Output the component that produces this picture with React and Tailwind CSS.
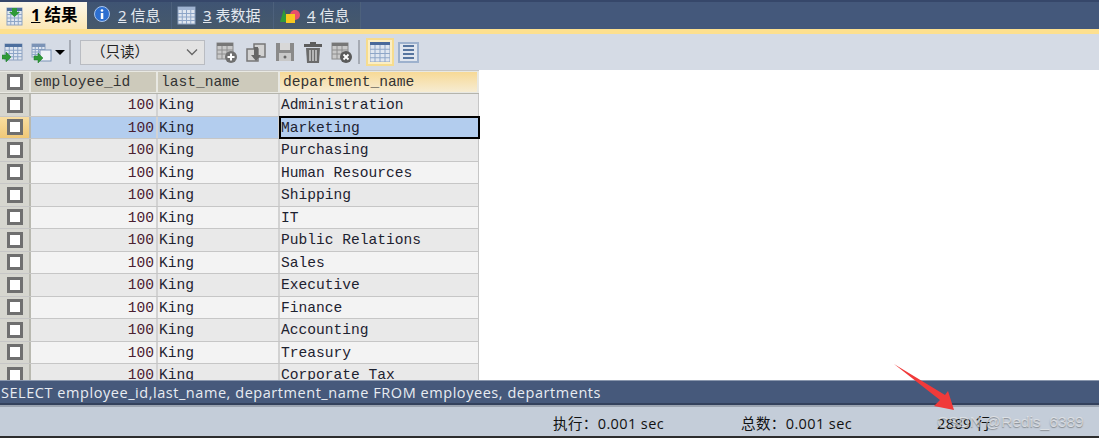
import React from "react";

const depts = ["Administration","Marketing","Purchasing","Human Resources","Shipping","IT","Public Relations","Sales","Executive","Finance","Accounting","Treasury","Corporate Tax"];
const cjk = { fontFamily: '"Noto Sans","Noto Sans CJK SC",sans-serif' };

function GridIcon({ x = 0, y = 0, w = 20, h = 20, c = "#4d6f9e" }) {
  return (
    <g>
      <rect x={x} y={y} width={w} height={h} fill="#dfe6f0" stroke="#8ea2bf" />
      <rect x={x} y={y} width={w} height={3} fill={c} />
      {[1, 2, 3].map((i) => <line key={i} x1={x + (i * w) / 4} y1={y + 3} x2={x + (i * w) / 4} y2={y + h} stroke="#8ea6c8" />)}
      {[1, 2, 3].map((i) => <line key={i} x1={x} y1={y + 3 + (i * (h - 3)) / 4} x2={x + w} y2={y + 3 + (i * (h - 3)) / 4} stroke="#8ea6c8" />)}
    </g>
  );
}
const Svg = ({ children, w = 24, h = 24, className = "" }) => <svg width={w} height={h} viewBox={`0 0 ${w} ${h}`} className={`shrink-0 ${className}`}>{children}</svg>;
const Green = ({ x, y }) => <path transform={`translate(${x} ${y})`} d="M0 3h4V0l5 5-5 5V7H0z" fill="#2f9a38" stroke="#1c7a2a" strokeWidth=".5" />;

const Tab = ({ icon, num, label, active, w }) => (
  <div style={{ ...cjk }} className={`flex items-center h-full ${w} pl-[5px] gap-[6px] leading-none ${active ? "text-[16.5px] bg-gradient-to-b from-[#fbf7ea] to-[#fce7b4] text-black font-bold" : "text-[15px] bg-gradient-to-b from-[#3f5473] to-[#46596b] border-r border-[#4d617c] text-[#e3e8ef]"}`}>
    {icon}
    <span><span className="underline mr-[4px]">{num}</span>{label}</span>
  </div>
);

const Check = () => (
  <div className="size-[16px] bg-white border-[3px] border-[#6f6f6f]" />
);

const Row = ({ name, i }) => {
  const sel = i === 1;
  const alt = i % 2 === 0;
  const bg = sel ? "bg-[#b3cdee]" : alt ? "bg-[#e9e9e9]" : "bg-[#f3f3f3]";
  return (
    <div className="flex h-[22.5px] shrink-0 border-b border-[#c6c6c6] leading-[22px]">
      <div className={`w-[31px] flex items-center justify-center border-r-2 border-[#b9b9b0] ${sel ? "bg-gradient-to-b from-[#f8dd9f] to-[#f0c878]" : "bg-[#d6d6cf]"}`}><Check /></div>
      <div className={`w-[127px] border-r-2 border-[#d2d2d2] text-right pr-[2px] ${bg} text-[#4a2030]`}>100</div>
      <div className={`w-[122px] border-r-2 border-[#d2d2d2] pl-[1px] ${bg}`}>King</div>
      <div className={`w-[199px] pl-[1px] border-r border-[#c6c6c6] ${bg} ${sel ? "outline-2 -outline-offset-1 outline-black" : ""}`}>{name}</div>
    </div>
  );
};

const Head = ({ w, children, on }) => (
  <div className={`${w} h-full flex items-center pl-[3px] border-r-2 border-[#e8e8e2] ${on ? "bg-gradient-to-b from-[#f7d995] to-[#f6ecd2] text-[#333]" : "bg-[#cdcabb] text-[#333]"}`}>{children}</div>
);

export default function App() {
  return (
    <div className="relative w-[1099px] h-[438px] overflow-hidden bg-white flex flex-col" style={{ ...cjk }}>
      {/* Tabs */}
      <div className="h-[29px] shrink-0 bg-[#44587b] border-t-2 border-[#36476a] flex">
        <Tab active w="w-[87px]" num="1" label="结果" icon={<Svg w={20} h={22}><GridIcon x={2} y={3} w={15} h={17} /><path d="M7 3h5v4h3l-5.500 5-5.500-5h3z" fill="#2f9a38" /></Svg>} />
        <Tab w="w-[85px]" num="2" label="信息" icon={<Svg w={20} h={22}><circle cx="10" cy="9" r="7.500" fill="#2d6fd0" stroke="#a8c4ec" /><circle cx="10" cy="5.500" r="1.300" fill="#fff" /><rect x="8.800" y="8" width="2.500" height="6" fill="#fff" /></Svg>} />
        <Tab w="w-[102px]" num="3" label="表数据" icon={<Svg w={20} h={22}><GridIcon x={1} y={2} w={17} h={17} c="#9fb3d0" /></Svg>} />
        <Tab w="w-[87px]" num="4" label="信息" icon={<Svg w={22} h={22}><path d="M5 4l4 13H1z" fill="#2f9a38" /><circle cx="16" cy="10" r="5" fill="#e8506a" /><rect x="7" y="9" width="9" height="9" fill="#f8c820" /></Svg>} />
      </div>
      <div className="h-[5px] shrink-0 bg-[#fde08f]" />

      {/* Toolbar */}
      <div className="h-[36px] shrink-0 bg-[#d5dbe5] flex items-center pl-[2px]">
        <Svg w={22} h={24}><GridIcon x={3} y={4} w={17} h={16} /><Green x={0} y={12} /></Svg>
        <div className="w-[6px]" />
        <Svg w={22} h={24}><GridIcon x={2} y={4} w={13} h={13} c="#7b93b6" /><rect x="10" y="10" width="11" height="11" fill="#eef2f7" stroke="#7b93b6" /><Green x={4} y={13} /></Svg>
        <div className="ml-[3px] w-0 h-0 border-x-[5px] border-x-transparent border-t-[5px] border-t-black" />
        <div className="ml-[4px] w-[2px] h-[24px] bg-[#a6abb4]" />
        <div className="ml-[9px] w-[125px] h-[25px] bg-[#e3e3e3] border border-[#b9bcc2] flex items-center justify-between pl-[10px] pr-[6px] text-[14.5px] text-[#222]">
          <span>（只读）</span>
          <svg width="12" height="8" viewBox="0 0 12 8"><path d="M1 1.500l5 5 5-5" fill="none" stroke="#666" strokeWidth="1.300" /></svg>
        </div>
        <div className="ml-[10px] flex items-center gap-[8px]">
          <Svg w={22} h={24}><rect x="2" y="3" width="16" height="16" fill="#c9c9c9" stroke="#8a8a8a" /><rect x="2" y="3" width="16" height="3" fill="#777" /><path d="M2 10h16M2 14h16M7 6v13M12 6v13" stroke="#8e8e8e" /><circle cx="16" cy="17" r="6" fill="#707070" /><path d="M16 13.500v7M12.500 17h7" stroke="#fff" strokeWidth="2" /></Svg>
          <Svg w={22} h={24}><path d="M9 4h11v13H9z" fill="#d2d2d2" stroke="#777" strokeWidth="1.500" /><path d="M2 9h11v12H2z" fill="#d2d2d2" stroke="#777" strokeWidth="1.500" /><path d="M9 7v8H6l5 6 5-6h-3V7z" fill="#666" /></Svg>
          <Svg w={20} h={24}><path d="M1 3h18v18H1z" fill="#8a8a8a" /><rect x="5" y="3" width="10" height="7" fill="#d8d8d8" /><rect x="4" y="13" width="12" height="8" fill="#c8c8c8" /><circle cx="10" cy="17" r="1.500" fill="#666" /></Svg>
          <Svg w={20} h={24}><path d="M7 4V2h6v2h6v3H1V4z" fill="#5d5d5d" /><path d="M3 8h14l-1 15H4z" fill="#6b6b6b" /><path d="M7 10v11M10 10v11M13 10v11" stroke="#ddd" strokeWidth="1.300" /></Svg>
          <Svg w={22} h={24}><rect x="1" y="3" width="16" height="16" fill="#c9c9c9" stroke="#8a8a8a" /><rect x="1" y="3" width="16" height="3" fill="#777" /><path d="M1 10h16M1 14h16M6 6v13M11 6v13" stroke="#8e8e8e" /><circle cx="15" cy="17" r="6" fill="#5a5a5a" /><path d="M12.500 14.500l5 5M17.500 14.500l-5 5" stroke="#fff" strokeWidth="1.800" /></Svg>
        </div>
        <div className="ml-[5px] w-[2px] h-[24px] bg-[#a6abb4]" />
        <div className="ml-[6px] size-[28px] bg-[#fbeec4] border-2 border-[#f6dc8e] flex items-center justify-center">
          <Svg w={20} h={20}><GridIcon x={0} y={0} w={20} h={20} c="#49699a" /></Svg>
        </div>
        <div className="ml-[4px] size-[21px] bg-[#dfe5ee] border-2 border-[#9db1cd] flex flex-col justify-center gap-[2px] px-[3px]">
          <div className="h-[2px] bg-[#57759f]" /><div className="h-[2px] bg-[#57759f]" /><div className="h-[2px] bg-[#57759f]" /><div className="h-[2px] bg-[#57759f]" />
        </div>
      </div>

      {/* Grid */}
      <div className="h-[310px] shrink-0 overflow-hidden bg-white text-[14.6px] leading-[20px] text-[#1d2230] text-left font-medium" style={{ fontFamily: '"Liberation Mono",monospace' }}>
        <div className="w-[479px] bg-[#c6c6c6] pt-[1px] h-full flex flex-col">
          <div className="flex h-[23px] shrink-0 border-b border-[#b4b4ac] bg-[#e8e8e2] py-[1px] leading-[22px]">
            <div className="w-[31px] flex items-center justify-center bg-[#d6d6cf] border-r-2 border-[#e8e8e2]"><Check /></div>
            <Head w="w-[127px]">employee_id</Head>
            <Head w="w-[122px]">last_name</Head>
            <Head w="w-[199px]" on>department_name</Head>
          </div>
          {depts.map((d, i) => <Row key={d} name={d} i={i} />)}
        </div>
      </div>

      {/* SQL */}
      <div className="h-[25px] shrink-0 bg-[#46597b] border-t border-[#8a97ad] border-b-2 border-b-[#33415c] flex items-center pl-[1px] pt-[2px] text-[14.5px] tracking-[0.55px] text-[#e8ecf2]" style={{ fontFamily: '"Open Sans",sans-serif' }}>
        SELECT employee_id,last_name, department_name FROM employees, departments
      </div>
      {/* Status */}
      <div className="h-[33px] shrink-0 bg-[#c4cdd9] border-t-2 border-[#9aa3b0] border-b-2 border-b-[#2d2d2d] relative flex items-center pt-[5px] text-[14.5px] tracking-[0.4px] text-[#111]" style={{ fontFamily: '"Open Sans","Noto Sans CJK SC",sans-serif' }}>
        <span className="ml-[553px] w-[188px]">执行：0.001 sec</span>
        <span className="w-[196px]">总数：0.001 sec</span>
        <span>2889 行</span>
      </div>

      {/* Arrow annotation */}
      <svg width="80" height="62" viewBox="0 0 80 62" className="absolute left-[890px] top-[362px]">
        <path d="M4 2L55 33L58 29L64 48L44 44L50 38Z" fill="#f03a3a" />
      </svg>
      {/* Watermark */}
      <span className="absolute left-[937px] top-[412px] text-[15.5px] leading-[20px] text-[#f2f2f2]/60 [text-shadow:0_1px_1px_#55555588]" style={{ fontFamily: '"Liberation Sans",sans-serif' }}>CSDN @Redis_6389</span>
    </div>
  );
}
